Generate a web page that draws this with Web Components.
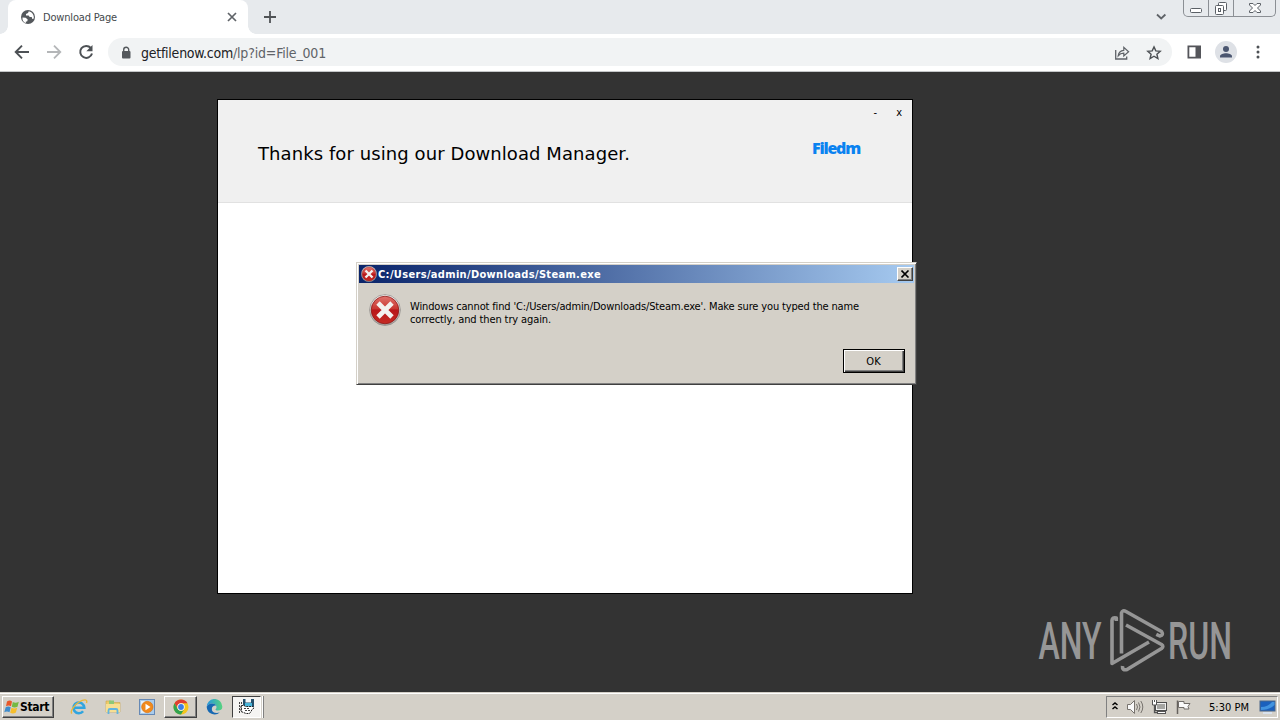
<!DOCTYPE html>
<html lang="en">
<head>
<meta charset="utf-8">
<title>Download Page</title>
<style>
  html, body { margin: 0; height: 100%; overflow: hidden; }
  body { font: 11px/13px "DejaVu Sans Condensed", "DejaVu Sans", sans-serif; color: #000; }
</style>
</head>
<body>
<desktop-screen>
  <browser-bar slot="browser">
    <fit-text slot="tab" width="74">Download Page</fit-text>
    <fit-text slot="host" width="92">getfilenow.com</fit-text>
    <fit-text slot="path" width="93">/lp?id=File_001</fit-text>
  </browser-bar>
  <manager-window slot="window">
    <fit-text slot="title" width="372">Thanks for using our Download Manager.</fit-text>
    <fit-text slot="logo" width="48">Filedm</fit-text>
  </manager-window>
  <error-dialog slot="window">
    <fit-text slot="title" width="223">C:/Users/admin/Downloads/Steam.exe</fit-text>
    <fit-text width="449">Windows cannot find 'C:/Users/admin/Downloads/Steam.exe'. Make sure you typed the name</fit-text>
    <fit-text width="141">correctly, and then try again.</fit-text>
  </error-dialog>
  <run-watermark slot="window"></run-watermark>
  <task-bar slot="taskbar">
    <fit-text slot="start" width="29">Start</fit-text>
    <fit-text slot="clock" width="40">5:30 PM</fit-text>
  </task-bar>
</desktop-screen>

<script>
class BaseElement extends HTMLElement {
  constructor() {
    super();
    const template = document.createElement('template');
    template.innerHTML = this.constructor.markup;
    this.attachShadow({ mode: 'open' });
    this.shadowRoot.appendChild(template.content.cloneNode(true));
  }
}

// One line of text, tracked so that it takes exactly `width` pixels
class FitText extends BaseElement {
  static markup = `
    <style>
      :host { display: block; white-space: nowrap; }
      span { display: inline-block; }
    </style>
    <span><slot></slot></span>
  `;

  connectedCallback() {
    const span = this.shadowRoot.querySelector('span');
    const width = Number(this.getAttribute('width'));
    const length = this.textContent.length;
    this.style.width = width + 'px';
    span.style.letterSpacing = '0px';
    const natural = span.getBoundingClientRect().width;
    span.style.letterSpacing = (width - natural) / length + 'px';
  }
}

class DesktopScreen extends BaseElement {
  static markup = `
    <style>
      :host { display: flex; flex-direction: column; width: 1280px; height: 720px; background: #333; overflow: hidden; }
      main { position: relative; flex: 1; }
    </style>
    <slot name="browser"></slot>
    <main><slot name="window"></slot></main>
    <slot name="taskbar"></slot>
  `;
}

class BrowserBar extends BaseElement {
  static markup = `
    <style>
      :host { display: block; height: 72px; border-bottom: 1px solid #c4c6c8; background: #fff; box-sizing: border-box; font-size: 11px; }
      svg { display: block; flex: none; }
      .strip { display: flex; height: 34px; background: #e7eaed; padding-left: 8px; }
      .tab { position: relative; display: flex; align-items: center; width: 240px; box-sizing: border-box; padding: 0 9px 0 12px; background: #fff; border-radius: 8px 8px 0 0; color: #45494d; }
      .tab::before, .tab::after { content: ""; position: absolute; bottom: 0; width: 8px; height: 8px; }
      .tab::before { left: -8px; background: radial-gradient(circle at 0 0, transparent 7.5px, #fff 8px); }
      .tab::after { right: -8px; background: radial-gradient(circle at 100% 0, transparent 7.5px, #fff 8px); }
      .label { flex: 1; padding-left: 7px; }
      .plus { margin: 10px 0 0 15px; }
      .right { display: flex; margin-left: auto; padding-right: 4px; }
      .chevron { margin: 12px 16px 0 0; }
      .caption { display: flex; width: 93px; height: 17px; box-sizing: border-box; border: 1px solid #8b8f94; border-top: 0; border-radius: 0 0 5px 5px; }
      .caption div { display: flex; justify-content: center; width: 24px; border-right: 1px solid #8b8f94; }
      .caption div:last-child { flex: 1; border: 0; }
      .toolbar { display: flex; align-items: center; height: 36px; padding: 0 14px; }
      .nav { display: flex; gap: 16px; }
      .omnibox { display: flex; align-items: center; width: 1064px; height: 28px; margin-left: 14px; box-sizing: border-box; padding: 1px 10px 0 10px; border-radius: 14px; background: #f1f3f4; font-size: 14px; line-height: 18px; color: #202124; }
      .lock { margin-right: 7px; }
      .path { color: #5f6368; }
      .actions { display: flex; gap: 16px; margin-left: auto; }
      .tools { display: flex; align-items: center; margin-left: 14px; gap: 10px; }
      .avatar { margin: 0 5px 0 3px; }
    </style>
    <div class="strip">
      <div class="tab">
        <svg width="16" height="16" viewBox="0 0 16 16"><circle cx="8" cy="8" r="7" fill="#54585c"/><path d="M2.5 8.6l3.2.2 2 1.8-.4 1.6-1.5.5v1.6C3.5 13.4 2.1 11 2.5 8.6zM8.8 2.2L8 4.1l-2 .8v1.5l2.6.1 1.1 1.6h2l.6 2 1.5-.6c.5-3.2-1.5-6.4-5-7.3z" fill="#fff"/></svg>
        <div class="label"><slot name="tab"></slot></div>
        <svg width="14" height="14" viewBox="0 0 14 14"><path d="M3 3l8 8M11 3l-8 8" stroke="#5f6368" stroke-width="1.7"/></svg>
      </div>
      <svg class="plus" width="14" height="14" viewBox="0 0 14 14"><path d="M7 1v12M1 7h12" stroke="#505356" stroke-width="1.8"/></svg>
      <div class="right">
        <svg class="chevron" width="12" height="10" viewBox="0 0 12 10"><path d="M2 2.5l4.2 4 4.2-4" fill="none" stroke="#5f6368" stroke-width="1.8"/></svg>
        <div class="caption">
          <div><svg width="14" height="16"><rect x="1.5" y="8.5" width="11" height="4" rx="1" fill="#fff" stroke="#5b6066"/></svg></div>
          <div><svg width="14" height="16"><rect x="4.5" y="2.5" width="8" height="8" rx="1" fill="#fff" stroke="#5b6066"/><rect x="1.5" y="5.5" width="8" height="9" rx="1" fill="#fff" stroke="#5b6066"/><rect x="4.5" y="8.5" width="2" height="3" fill="none" stroke="#5b6066"/></svg></div>
          <div><svg width="14" height="16"><path d="M1.5 3.5H5l2 2 2-2h3.5V5L9.500 8l3 3v1.500H9l-2-2-2 2H1.500V11l3-3-3-3z" fill="#fff" stroke="#5b6066"/></svg></div>
        </div>
      </div>
    </div>
    <div class="toolbar">
      <div class="nav">
        <svg width="16" height="16" viewBox="0 0 16 16"><path d="M15 8H2M8 1.700L1.700 8 8 14.300" fill="none" stroke="#4d5155" stroke-width="1.9"/></svg>
        <svg width="16" height="16" viewBox="0 0 16 16"><path d="M1 8h13M8 1.700L14.300 8 8 14.300" fill="none" stroke="#b4b6b8" stroke-width="1.8"/></svg>
        <svg width="16" height="16" viewBox="0 0 16 16"><path d="M12.800 4A6 6 0 1 0 14 9.500" fill="none" stroke="#4d5155" stroke-width="2"/><path d="M14.500 1v6.200H8.300z" fill="#4d5155"/></svg>
      </div>
      <div class="omnibox">
        <svg class="lock" width="16" height="16" viewBox="0 0 16 16"><rect x="4" y="6" width="8.5" height="7.5" rx="1" fill="#54585c"/><path d="M5.700 6.500V4.700a2.500 2.500 0 0 1 5 0v1.800" fill="none" stroke="#54585c" stroke-width="1.4"/></svg>
        <slot name="host"></slot><div class="path"><slot name="path"></slot></div>
        <div class="actions">
          <svg width="16" height="16" viewBox="0 0 16 16"><path d="M1.700 5v9h11v-2.500" fill="none" stroke="#5f6368" stroke-width="1.3"/><path d="M4.200 10.800C4.600 7.300 6.600 5.500 9.800 5.300V2.400l4.800 4.300-4.800 4.200V8.200c-2.500 0-4.200.8-5.600 2.600z" fill="none" stroke="#5f6368" stroke-width="1.2"/></svg>
          <svg width="16" height="16" viewBox="0 0 16 16"><path d="M8 1.900l1.800 4 4.400.4-3.300 2.900 1 4.300L8 11.200l-3.900 2.300 1-4.300-3.300-2.900 4.400-.4z" fill="none" stroke="#4d5155" stroke-width="1.4"/></svg>
        </div>
      </div>
      <div class="tools">
        <svg width="16" height="16" viewBox="0 0 16 16"><path d="M1.500 1.500h13.500v13H1.500zM3.300 3.300v9.400h6.200V3.300z" fill="#54555a" fill-rule="evenodd"/></svg>
        <svg class="avatar" width="22" height="22" viewBox="0 0 22 22"><circle cx="11" cy="11" r="11" fill="#dee1e6"/><circle cx="11" cy="8" r="3" fill="#4b5670"/><path d="M5 16.500v-1.300c0-2 3.500-3 6-3s6 1 6 3v1.300z" fill="#4b5670"/></svg>
        <svg width="12" height="16" viewBox="0 0 12 16" fill="#4d5155"><circle cx="6" cy="3" r="1.5"/><circle cx="6" cy="8" r="1.5"/><circle cx="6" cy="13" r="1.5"/></svg>
      </div>
    </div>
  `;
}

class ManagerWindow extends BaseElement {
  static markup = `
    <style>
      :host { position: absolute; left: 217px; top: 27px; width: 696px; height: 495px; box-sizing: border-box; border: 1px solid #000; background: #fff; }
      header { height: 103px; box-sizing: border-box; border-bottom: 1px solid #e1e1e1; background: #f0f0f0; }
      .controls { display: flex; justify-content: flex-end; gap: 19px; height: 26px; line-height: 26px; padding-right: 10px; }
      .row { display: flex; justify-content: space-between; padding: 16px 52px 0 40px; }
      .title { font: 18px/24px "DejaVu Sans", sans-serif; }
      .logo { font: 800 16px/13px "Open Sans", sans-serif; color: #0a82f0; }
    </style>
    <header>
      <div class="controls"><span>-</span><span>x</span></div>
      <div class="row">
        <div class="title"><slot name="title"></slot></div>
        <div class="logo"><slot name="logo"></slot></div>
      </div>
    </header>
  `;
}

class ErrorIcon extends BaseElement {
  static markup = `
    <style>
      :host { display: block; width: 32px; height: 32px; flex: none; }
      svg { display: block; width: 100%; height: 100%; }
    </style>
    <svg viewBox="0 0 32 32">
      <defs>
        <linearGradient id="red" x2="0" y2="1"><stop offset="0" stop-color="#e0726c"/><stop offset=".45" stop-color="#c93832"/><stop offset=".5" stop-color="#b9161a"/><stop offset="1" stop-color="#c52b24"/></linearGradient>
        <linearGradient id="rim" x2="0" y2="1"><stop offset="0" stop-color="#fff"/><stop offset="1" stop-color="#a7a5a3"/></linearGradient>
      </defs>
      <circle cx="16" cy="16" r="15.4" fill="url(#rim)" stroke="#918b88" stroke-width=".8"/>
      <circle cx="16" cy="16" r="13.8" fill="url(#red)" stroke="#8d1715" stroke-width=".8"/>
      <path d="M9 9l14 14M23 9L9 23" stroke="#f3f1ef" stroke-width="4.8"/>
    </svg>
  `;
}

class ErrorDialog extends BaseElement {
  static markup = `
    <style>
      :host { position: absolute; left: 356px; top: 190px; width: 561px; height: 123px; box-sizing: border-box; padding: 1px; background: #d4d0c8; border: 1px solid; border-color: #d4d0c8 #404040 #404040 #d4d0c8; box-shadow: inset 1px 1px #fff, inset -1px -1px #808080; }
      .titlebar { display: flex; align-items: center; height: 18px; margin: 1px; box-sizing: border-box; padding: 0 1px 0 2px; color: #fff; font-weight: bold; background: linear-gradient(90deg, #0a246a, #a6caf0); }
      .titlebar error-icon { width: 16px; height: 16px; margin-right: 1px; }
      .close { display: flex; width: 16px; height: 14px; margin-left: auto; background: #d4d0c8; box-sizing: border-box; border: 1px solid; border-color: #fff #404040 #404040 #fff; box-shadow: inset -1px -1px #808080; }
      .close svg { display: block; margin: 2px 0 0 3px; }
      .content { display: flex; padding: 10px 11px 0 11px; }
      .message { padding: 6px 0 0 9px; }
      .footer { display: flex; justify-content: flex-end; padding: 23px 10px 0 0; }
      button { width: 62px; height: 24px; padding: 0 1px 0 0; font: inherit; border: 1px solid #000; border-radius: 0; background: #d4d0c8; box-shadow: inset 1px 1px #fff, inset -1px -1px #404040, inset -2px -2px #808080; }
    </style>
    <div class="titlebar">
      <error-icon></error-icon>
      <slot name="title"></slot>
      <div class="close"><svg width="9" height="8" viewBox="0 0 9 8"><path d="M.5.5l7 7M7.500.5l-7 7" stroke="#000" stroke-width="1.6"/></svg></div>
    </div>
    <div class="content">
      <error-icon></error-icon>
      <div class="message"><slot></slot></div>
    </div>
    <div class="footer"><button>OK</button></div>
  `;
}

class RunWatermark extends BaseElement {
  static markup = `
    <style>
      :host { position: absolute; left: 1032px; top: 532px; width: 240px; height: 74px; }
      svg { display: block; font: 500 51.5px Roboto, sans-serif; }
    </style>
    <svg width="240" height="74" viewBox="0 0 240 74" fill="#969696">
      <text x="6.5" y="55" textLength="63" lengthAdjust="spacingAndGlyphs">ANY</text>
      <text x="136" y="55" textLength="64" lengthAdjust="spacingAndGlyphs">RUN</text>
      <g fill="none" stroke="#969696" stroke-width="3.6" stroke-linejoin="round">
        <path d="M84.300 17v-3q-4-1-4.300 2.500V59.500L117 38"/>
        <path d="M89.500 49.500V9q1-3.500 4.500-1.500L129.500 27.500q2.500 3.500-1.700 4.500l-3.500-1.700"/>
        <path d="M94 21L129.500 40.500q2.700 1.900 0 4L95 65.500q-5 1.200-4.500-3.500"/>
      </g>
    </svg>
  `;
}

class TaskBar extends BaseElement {
  static markup = `
    <style>
      :host { display: flex; align-items: center; height: 28px; box-sizing: border-box; padding: 3px 2px 1px 2px; background: #d4d0c8; box-shadow: inset 0 1px #d4d0c8, inset 0 2px #fff; }
      svg { display: block; flex: none; }
      .raised { border: 1px solid; border-color: #fff #404040 #404040 #fff; box-shadow: inset -1px -1px #808080; box-sizing: border-box; }
      .start { display: flex; align-items: center; width: 52px; height: 22px; font-weight: bold; font-size: 12px; }
      .launch { display: flex; align-items: center; height: 22px; margin-left: 8px; }
      .launch > div { display: flex; align-items: center; justify-content: center; width: 34px; height: 22px; box-sizing: border-box; }
      .launch .raised { width: 33px; }
      .launch .active { width: 29px; margin-left: 1px; border: 1px solid; border-color: #404040 #fff #fff #404040; background: #f5f4f2; }
      .launch .mark { width: 2px; height: 22px; margin-left: 1px; background: #fff; border-right: 1px solid #808080; }
      .tray { display: flex; align-items: center; width: 172px; height: 22px; margin-left: auto; box-sizing: border-box; padding: 0 2px 0 4px; border: 1px solid; border-color: #808080 #fff #fff #808080; }
      .volume, .network, .flag { margin-left: 7px; }
      .clock { margin: 0 10px 0 17px; }
    </style>
    <div class="start raised">
      <svg width="17" height="16" viewBox="0 0 17 16"><path d="M4 2.500q3-2 5 0L8 7.300q-2.300-1.500-5 0z" fill="#e8582a"/><path d="M9.800 3q2.700 1.500 6-.2l-1.300 5q-3 1.600-5.700 0z" fill="#74b943"/><path d="M2.700 8.300q2.600-1.500 5 0l-1.200 5q-2.500-1.700-5.200 0z" fill="#3f8ccc"/><path d="M8.500 8.700q2.700 1.600 5.700.1l-1.300 4.800q-3 1.700-5.700.1z" fill="#f6be2c"/></svg>
      <slot name="start"></slot>
    </div>
    <div class="launch">
      <div><svg width="18" height="18" viewBox="0 0 18 18"><path d="M4.500 9.700h9.800a5.400 5.400 0 1 0-1.200 3.600" fill="none" stroke="#31a5df" stroke-width="2.600"/><path d="M2 15.500C-.5 14 4 7 9 4s9-3 7.500 1" fill="none" stroke="#e9b83b" stroke-width="1.400"/></svg></div>
      <div><svg width="18" height="18" viewBox="0 0 18 18"><path d="M2 3h5l1 1.500h8V14H2z" fill="#eecb6b" stroke="#c9a44a" stroke-width=".6"/><path d="M5 2.500h5v4H5z" fill="#8cc878"/><path d="M2 6h14v8H2z" fill="#f7df92"/><path d="M4.500 16v-3.500q0-1.500 1.500-1.500h6q1.500 0 1.500 1.500V16" fill="none" stroke="#62b4de" stroke-width="1.800"/></svg></div>
      <div><svg width="18" height="18" viewBox="0 0 18 18"><rect x="1.500" y="1.500" width="15" height="15" fill="#a9ccec" stroke="#6689b5"/><rect x="3" y="3" width="9" height="12" fill="#e4eff8"/><circle cx="9.300" cy="9" r="5.700" fill="#f18a1c" stroke="#d36d0c" stroke-width=".6"/><path d="M7.500 5.800v6.400l5-3.200z" fill="#fff"/></svg></div>
      <div class="raised"><svg width="16" height="16" viewBox="0 0 16 16"><circle cx="8" cy="8" r="7.500" fill="#f5c51c"/><path d="M1.500 4.250A7.500 7.500 0 0 1 14.500 4.250H8A3.750 3.750 0 0 0 4.750 9.900z" fill="#df3e32"/><path d="M1.500 4.250A7.500 7.500 0 0 0 8 15.500l3.250-5.600A3.750 3.750 0 0 1 4.750 9.900z" fill="#31a350"/><circle cx="8" cy="8" r="3.700" fill="#fff"/><circle cx="8" cy="8" r="2.900" fill="#3c7ee5"/></svg></div>
      <div><svg width="17" height="17" viewBox="0 0 17 17"><defs><linearGradient id="edge"><stop offset="0" stop-color="#2796df"/><stop offset="1" stop-color="#57d37e"/></linearGradient></defs><path d="M.7 8A7.800 7.800 0 0 1 16.300 7.500c.3 3-2 4-4.300 4-1.700 0-2.500-.5-2.500-1 0-.7 1-.8 1-2.300 0-2.200-2-3.600-4.500-3.600C3.500 4.600 1.500 6 .7 8z" fill="url(#edge)"/><path d="M.7 8c.8-2 2.800-3.400 5.300-3.400 2 0 3.500.8 4.200 2-2.200-.5-4.400.8-4.400 3.300 0 3 3 5 8 3.700A8 8 0 0 1 .7 8z" fill="#1668b2"/></svg></div>
      <div class="active"><svg width="18" height="18" viewBox="0 0 18 18"><path d="M5 1h11v8H5z" fill="#24506c"/><path d="M7.500 1H13v3.500H7.500z" fill="#f4f8fa"/><path d="M7 5h7v4H7z" fill="#48b5d9"/><path d="M3 7.500h3l1.500 1H15l1 1.500-2 1.500-1 2-1.500 2H8L3 13.500z" fill="#fff" stroke="#222" stroke-dasharray="2 .8"/><path d="M1.500 4v11M3.500 4v10M6 10.500h6M7 12.500h5" stroke="#444" stroke-dasharray="2 1"/></svg></div>
      <div class="mark"></div>
    </div>
    <div class="tray">
      <svg width="8" height="12" viewBox="0 0 8 12"><path d="M1.500 4l2.500-2 2.500 2M1.500 8l2.500-2 2.500 2" fill="none" stroke="#000" stroke-width="1.500"/></svg>
      <svg class="volume" width="18" height="16" viewBox="0 0 18 16"><path d="M1.500 5.500h3l4-4v13l-4-4h-3z" fill="#fafafa" stroke="#77736e"/><path d="M10.500 5q2 3 0 6M12.500 3.500q3 4.500 0 9M14.800 2q4 6 0 12" fill="none" stroke="#77736e"/></svg>
      <svg class="network" width="17" height="16" viewBox="0 0 17 16"><rect x="4.500" y="3.500" width="11" height="8" fill="#a5a5a2" stroke="#4e4e4e"/><rect x="5.500" y="4.500" width="9" height="6" fill="none" stroke="#f1f1f1"/><rect x="6.500" y="12.500" width="8" height="2" fill="#fff" stroke="#555"/><path d="M3.500 6v7.500h3" fill="none" stroke="#555" stroke-width="1.300"/><path d="M1.500 1v5h4V1M3.500 1v2" fill="#fff" stroke="#555"/></svg>
      <svg class="flag" width="17" height="16" viewBox="0 0 17 16"><path d="M2.500 15V1.500" stroke="#66625e" stroke-width="1.500"/><path d="M3.500 2.500h5.500v2h6l-2 3 1 2.500h-5V8.500H3.500z" fill="#fafafa" stroke="#716d69"/></svg>
      <div class="clock"><slot name="clock"></slot></div>
      <svg width="17" height="16" viewBox="0 0 17 16"><rect x="1" y="2" width="15" height="10" fill="#1b60bd" stroke="#4c6687"/><path d="M2 8q7 0 11-5h2.500v3q-5 5-13.500 5z" fill="#4293df"/><path d="M4 14h9" stroke="#d9e2ed" stroke-width="2"/></svg>
    </div>
  `;
}

customElements.define('error-icon', ErrorIcon);
customElements.define('desktop-screen', DesktopScreen);
customElements.define('browser-bar', BrowserBar);
customElements.define('manager-window', ManagerWindow);
customElements.define('error-dialog', ErrorDialog);
customElements.define('run-watermark', RunWatermark);
customElements.define('task-bar', TaskBar);
// last, since it measures with the fonts its hosts hand down
customElements.define('fit-text', FitText);
</script>
</body>
</html>
